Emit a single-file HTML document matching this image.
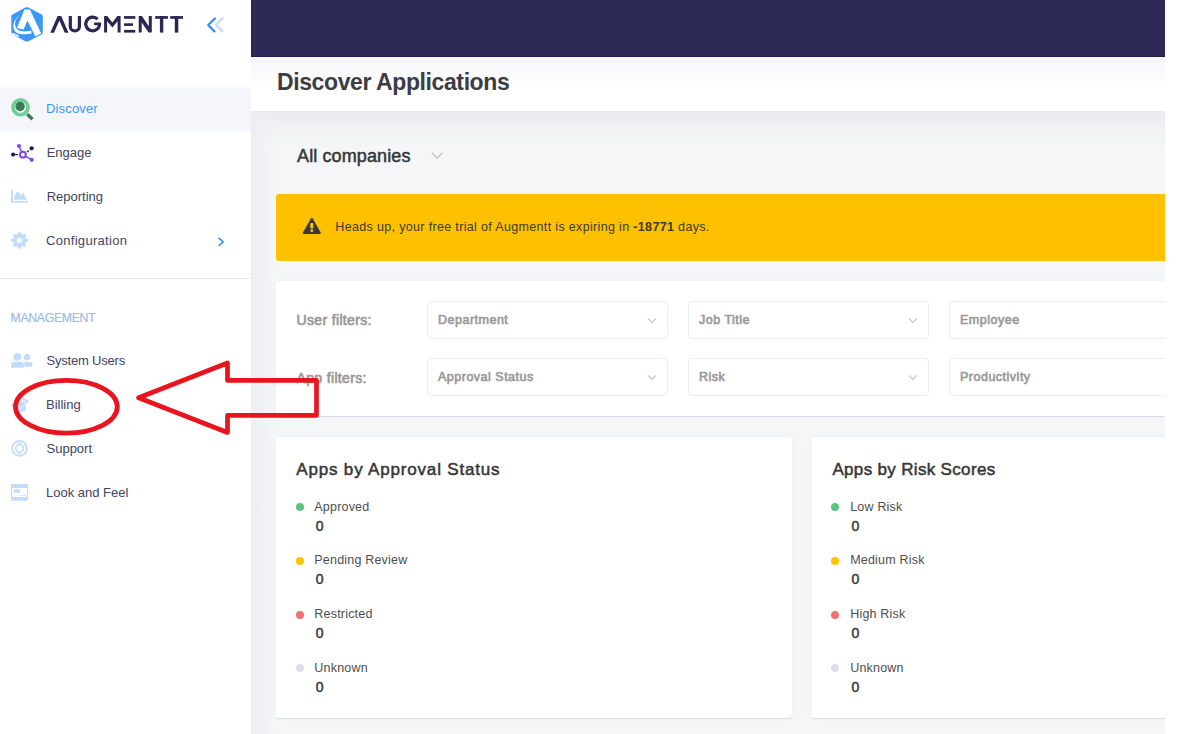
<!DOCTYPE html>
<html><head><meta charset="utf-8">
<style>
html,body{margin:0;padding:0;}
body{width:1199px;height:734px;position:relative;overflow:hidden;background:#fff;font-family:"Liberation Sans",sans-serif;}
.a{position:absolute;}
.t{position:absolute;white-space:nowrap;line-height:1;}
#side{left:0;top:0;width:251px;height:734px;background:#fff;}
#main{left:251px;top:0;width:914px;height:734px;background:#f5f6f8;overflow:hidden;}
#topbar{left:0;top:0;width:914px;height:56px;background:#2d2a57;border-bottom:1px solid #221e4c;}
#band{left:0;top:57px;width:914px;height:54px;background:linear-gradient(#f6f6f9,#fff 60%);}
#shadow{left:0;top:111px;width:914px;height:40px;background:linear-gradient(#ebebef,#f2f2f5 45%,#f5f6f8);}
.nav{color:#42445f;font-size:13px;}
.card{background:#fff;border-radius:3px;box-shadow:0 1px 0 #dcdce6,0 0 10px rgba(40,40,90,0.035);}
.dd{position:absolute;background:#fff;border:1px solid #ececf4;border-radius:4px;box-sizing:border-box;height:38px;}
.ddt{position:absolute;left:10px;font-size:12.5px;-webkit-text-stroke:0.65px #999;letter-spacing:0.5px;color:#9a9a9a;line-height:1;white-space:nowrap;}
.chev{position:absolute;width:5px;height:5px;border-right:1.2px solid #c4c4c4;border-bottom:1.2px solid #c4c4c4;transform:rotate(45deg);}
.lg{font-size:12.5px;letter-spacing:0.2px;color:#4d4d4d;}
.zero{font-size:14px;-webkit-text-stroke:0.5px #3a3a3a;color:#3a3a3a;}
.dot{position:absolute;width:8px;height:8px;border-radius:50%;}
</style></head><body>

<div id="side" class="a">
  <!-- logo -->
  <svg class="a" style="left:0;top:0" width="251" height="50" viewBox="0 0 251 50">
    <path d="M25.3,7.6 Q26.9,6.8 28.5,7.6 L41.6,14.5 Q42.8,15.1 42.8,16.4 L42.8,32.6 Q42.8,33.8 41.6,34.4 L28.5,41.3 Q26.9,42.1 25.3,41.3 L12.5,34.4 Q11.3,33.8 11.3,32.6 L11.3,16.4 Q11.3,15.1 12.5,14.5 Z" fill="#3a98f8"/>
    <g>
    <polygon points="24.4,9.6 29.9,9.6 41.2,33.4 35.4,36.6 27.4,20.6 23.6,29.6 16.9,27.9" fill="#fff"/>
    <path d="M20.8,14.6 C15.5,17.5 12.8,23 13.6,28.2 C14.6,33 19.5,34.6 24.5,34.3 C27.5,34.1 30,33.6 31.5,33.4 L31.3,30.4 C28.5,31.2 25.5,31.6 22.6,31.3 C18,30.8 15.4,28.5 15.1,24.5 C14.9,20.5 17.3,16.8 20.8,14.6 Z" fill="#fff"/>
    <polygon points="11,33.4 13,34.6 17.8,36.8 19.2,36.2 18.2,35.3 13.5,33.1" fill="#fff"/>
    </g>
    <g fill="#2b2753">
      <polygon points="50.3,32.7 57.6,16.1 61.2,16.1 68.5,32.7 64.8,32.7 59.4,20.4 54,32.7"/>
      <path d="M70.3,16.1 V26.4 A4.55,4.55 0 0 0 79.4,26.4 V16.1" fill="none" stroke="#2b2753" stroke-width="3.2"/>
      <path d="M97.6,19.2 A6.85,6.85 0 1 0 99.5,24.2" fill="none" stroke="#2b2753" stroke-width="3.2"/>
      <rect x="94.1" y="22.5" width="7" height="2.7"/>
      <polygon points="104.1,32.6 104.1,16.1 107.3,16.1 112.35,22.6 117.4,16.1 120.6,16.1 120.6,32.6 117.6,32.6 117.6,21.3 112.35,27.6 107.1,21.3 107.1,32.6"/>
      <rect x="124" y="16.1" width="11.3" height="2.7"/>
      <rect x="124" y="23.3" width="9" height="2.6"/>
      <rect x="124" y="29.9" width="11.3" height="2.7"/>
      <polygon points="138.7,32.6 138.7,16.1 141.9,16.1 148.8,26.3 148.8,16.1 151.8,16.1 151.8,32.6 148.6,32.6 141.7,22.4 141.7,32.6"/>
      <rect x="155.2" y="16.1" width="12.8" height="2.7"/>
      <rect x="159.9" y="16.1" width="3.4" height="16.5"/>
      <rect x="170.2" y="16.1" width="12.8" height="2.7"/>
      <rect x="174.8" y="16.1" width="3.5" height="16.5"/>
    </g>
    <polyline points="215,18.4 208.2,24.9 214.5,31.5" fill="none" stroke="#2d8cf5" stroke-width="2.1" stroke-linecap="round" stroke-linejoin="round"/>
    <polyline points="222.7,18 215.9,24.9 222.3,31.3" fill="none" stroke="#c0dcfb" stroke-width="2.1" stroke-linecap="round" stroke-linejoin="round"/>
  </svg>
  <div class="a" style="left:0;top:87px;width:251px;height:44px;background:#f5f6fb"></div>
  <svg class="a" style="left:0;top:85px" width="40" height="420" viewBox="0 85 40 420">
    <!-- discover -->
    <circle cx="20.46" cy="107.3" r="7.45" fill="none" stroke="#74cd95" stroke-width="3.7"/>
    <circle cx="20.1" cy="106.5" r="4.7" fill="#3a7a55"/>
    <line x1="27.3" y1="114.3" x2="32.5" y2="119.3" stroke="#3a7a55" stroke-width="3.4"/>
    <!-- engage -->
    <line x1="19" y1="146" x2="22.9" y2="154.7" stroke="#7b48f0" stroke-width="1.4"/>
    <line x1="22.9" y1="154.7" x2="31.7" y2="159.8" stroke="#7b48f0" stroke-width="1.4"/>
    <line x1="15.3" y1="154.6" x2="18" y2="154.6" stroke="#1e1a45" stroke-width="1.2"/>
    <line x1="27" y1="151.9" x2="29" y2="150.4" stroke="#1e1a45" stroke-width="1.2"/>
    <circle cx="22.88" cy="154.7" r="2.9" fill="#fff" stroke="#7b48f0" stroke-width="2"/>
    <circle cx="19" cy="146" r="2.1" fill="#7b48f0"/>
    <circle cx="31.6" cy="148.3" r="2.1" fill="#1e1a45"/>
    <circle cx="13.1" cy="154.5" r="2.1" fill="#1e1a45"/>
    <circle cx="31.7" cy="159.8" r="2.1" fill="#7b48f0"/>
    <!-- reporting -->
    <g fill="#c2dcfb">
      <rect x="11" y="190.1" width="2" height="12.6"/>
      <rect x="11" y="200.9" width="16.9" height="1.8"/>
      <polygon points="14.15,199.7 14.15,196.4 17.45,191.1 20.6,194.9 23.45,193.1 26.9,199.7"/>
    </g>
    <!-- gear -->
    <g fill="#c2dcfb">
      <circle cx="19.45" cy="240.4" r="6.6"/>
      <g stroke="#c2dcfb" stroke-width="3">
        <line x1="19.45" y1="232.1" x2="19.45" y2="248.7"/>
        <line x1="11" y1="240.4" x2="27.9" y2="240.4"/>
        <line x1="13.6" y1="234.55" x2="25.3" y2="246.25"/>
        <line x1="25.3" y1="234.55" x2="13.6" y2="246.25"/>
      </g>
      <circle cx="19.45" cy="240.4" r="2.6" fill="#fff"/>
    </g>
    <!-- system users -->
    <g fill="#c2dcfb">
      <circle cx="17.16" cy="356.8" r="3.9"/>
      <circle cx="26.97" cy="357.3" r="3.3"/>
      <path d="M11.1,367.8 V364 Q11.1,361.7 13.4,361.7 H21.4 Q23.7,361.7 23.7,364 V367.8 Z"/>
      <path d="M24.3,366.8 V362 H30.1 Q32.4,362 32.4,364.3 V366.8 Z"/>
    </g>
    <!-- billing -->
    <g fill="#c2dcfb">
      <polygon points="10.5,405.3 13.3,402.6 13.3,408"/>
      <rect x="18.6" y="404" width="7.1" height="7.6" rx="0.8"/>
      <path d="M18.6,404 L21,398.5 Q22,397.6 23.5,398.2 L28.4,400.6 Q29.4,401.6 28.2,402.6 L25.7,404 Z"/>
      <line x1="18.8" y1="410.5" x2="25" y2="404.3" stroke="#fff" stroke-width="0.8"/>
      <ellipse cx="23.6" cy="401.3" rx="2" ry="0.9" transform="rotate(20 23.6 401.3)" fill="#fff"/>
    </g>
    <!-- support -->
    <g fill="none" stroke="#c2dcfb">
      <circle cx="19.5" cy="448.4" r="7.4" stroke-width="1.8"/>
      <circle cx="19.5" cy="448.4" r="3.8" stroke-width="1.6"/>
      <line x1="19.5" y1="440.5" x2="19.5" y2="444.6" stroke-width="2.6"/>
      <line x1="19.5" y1="452.2" x2="19.5" y2="456.4" stroke-width="2.6"/>
    </g>
    <circle cx="19.5" cy="442.6" r="0.8" fill="#fff"/>
    <circle cx="19.5" cy="454.2" r="0.8" fill="#fff"/>
    <!-- look and feel -->
    <g fill="#c2dcfb">
      <path d="M12.5,484.1 H26.7 Q28.2,484.1 28.2,485.6 V499.2 Q28.2,500.7 26.7,500.7 H12.5 Q11,500.7 11,499.2 V485.6 Q11,484.1 12.5,484.1 Z M12.2,488 V497 H26.9 V488 Z" fill-rule="evenodd"/>
      <rect x="13.8" y="489.2" width="6.2" height="3.6"/>
      <rect x="19.8" y="495" width="1.4" height="0.9"/>
      <rect x="21.8" y="495" width="1.4" height="0.9"/>
      <rect x="23.8" y="495" width="2" height="0.9"/>
    </g>
    <!-- config chevron -->
  </svg>
  <svg class="a" style="left:214px;top:234px" width="14" height="16" viewBox="214 234 14 16">
    <polyline points="218.6,237.9 223.2,241.9 218.6,245.9" fill="none" stroke="#3d8ef5" stroke-width="1.6"/>
  </svg>
  <div class="t nav" style="left:46px;top:101.8px;letter-spacing:0.15px;color:#3d96f5">Discover</div>
  <div class="t nav" style="left:46.7px;top:145.8px">Engage</div>
  <div class="t nav" style="left:46.7px;top:189.8px">Reporting</div>
  <div class="t nav" style="left:46px;top:233.8px;letter-spacing:0.3px">Configuration</div>
  <div class="a" style="left:0;top:278px;width:251px;height:1px;background:#e3e6ee"></div>
  <div class="t" style="left:10.6px;top:312px;font-size:12.3px;letter-spacing:-0.35px;-webkit-text-stroke:0.2px #9bbbe4;color:#9bbbe4">MANAGEMENT</div>
  <div class="t nav" style="left:46.5px;top:353.8px;letter-spacing:-0.2px">System Users</div>
  <div class="t nav" style="left:46px;top:397.8px">Billing</div>
  <div class="t nav" style="left:46.5px;top:441.8px">Support</div>
  <div class="t nav" style="left:46px;top:485.8px">Look and Feel</div>
</div>

<div id="main" class="a">
  <div id="topbar" class="a"></div>
  <div id="band" class="a"></div>
  <div id="shadow" class="a"></div>
  <div class="a" style="left:0;top:111px;width:24px;height:623px;background:linear-gradient(to right,#eeeef2,rgba(245,246,249,0))"></div>
  <div class="t" style="left:26px;top:70.6px;font-size:23px;letter-spacing:-0.4px;font-weight:bold;color:#3b3c44">Discover Applications</div>

  <div class="t" style="left:46px;top:146.6px;font-size:18px;letter-spacing:0.12px;-webkit-text-stroke:0.5px #363636;color:#363636">All companies</div>
  <svg class="a" style="left:178px;top:149px" width="16" height="13" viewBox="427 149 16 13"><polyline points="430,152.8 435.15,158.2 440.3,152.8" fill="none" stroke="#c6c6c6" stroke-width="1.5"/></svg>

  <div class="a" style="left:25px;top:194px;width:900px;height:67px;background:#ffc000;border-radius:3px"></div>
  <svg class="a" style="left:50px;top:216px" width="22" height="20" viewBox="301 216 22 20">
    <path d="M311.15,218.2 Q311.85,217.2 312.55,218.2 L320.7,232.4 Q321.1,233.9 319.7,234.1 H303.9 Q302.5,233.9 302.9,232.4 Z" fill="#343840"/>
    <rect x="310.2" y="223" width="3.2" height="5.4" rx="0.9" fill="#ffc000"/>
    <circle cx="311.8" cy="230.8" r="1.45" fill="#ffc000"/>
  </svg>
  <div class="t" style="left:84.3px;top:221px;font-size:12.5px;letter-spacing:0.34px;color:#3a3a3a">Heads up, your free trial of Augmentt is expiring in <b>-18771</b> days.</div>

  <div class="a card" style="left:25px;top:281px;width:900px;height:135px;"></div>
  <div class="t" style="left:45.5px;top:313.4px;font-size:14px;-webkit-text-stroke:0.7px #999;letter-spacing:0.35px;color:#9a9a9a">User filters:</div>
  <div class="t" style="left:45.5px;top:370.7px;font-size:14px;-webkit-text-stroke:0.7px #999;letter-spacing:0.35px;color:#9a9a9a">App filters:</div>

  <div class="dd" style="left:176px;top:301px;width:241px"><div class="ddt" style="top:11.8px">Department</div><svg class="a" style="left:217px;top:13px" width="14" height="10" viewBox="0 0 14 10"><polyline points="2.9,3.4 6.95,7.4 11,3.4" fill="none" stroke="#c4c4c4" stroke-width="1.2"/></svg></div>
  <div class="dd" style="left:437px;top:301px;width:241px"><div class="ddt" style="top:11.8px">Job Title</div><svg class="a" style="left:217px;top:13px" width="14" height="10" viewBox="0 0 14 10"><polyline points="2.9,3.4 6.95,7.4 11,3.4" fill="none" stroke="#c4c4c4" stroke-width="1.2"/></svg></div>
  <div class="dd" style="left:698px;top:301px;width:241px"><div class="ddt" style="top:11.8px">Employee</div></div>
  <div class="dd" style="left:176px;top:358px;width:241px"><div class="ddt" style="top:11.8px">Approval Status</div><svg class="a" style="left:217px;top:13px" width="14" height="10" viewBox="0 0 14 10"><polyline points="2.9,3.4 6.95,7.4 11,3.4" fill="none" stroke="#c4c4c4" stroke-width="1.2"/></svg></div>
  <div class="dd" style="left:437px;top:358px;width:241px"><div class="ddt" style="top:11.8px">Risk</div><svg class="a" style="left:217px;top:13px" width="14" height="10" viewBox="0 0 14 10"><polyline points="2.9,3.4 6.95,7.4 11,3.4" fill="none" stroke="#c4c4c4" stroke-width="1.2"/></svg></div>
  <div class="dd" style="left:698px;top:358px;width:241px"><div class="ddt" style="top:11.8px">Productivity</div></div>

  <div class="a card" style="left:25px;top:437px;width:516px;height:281px;"></div>
  <div class="a card" style="left:561px;top:437px;width:516px;height:281px;"></div>
  <div class="t" style="left:45.3px;top:460.8px;font-size:17px;letter-spacing:0.82px;-webkit-text-stroke:0.5px #363636;color:#363636">Apps by Approval Status</div>
  <div class="t" style="left:581.4px;top:460.8px;font-size:17px;letter-spacing:0.33px;-webkit-text-stroke:0.5px #363636;color:#363636">Apps by Risk Scores</div>
  <div class="dot" style="left:45.00px;top:503.40px;background:#5cc27d"></div>
  <div class="t lg" style="left:63.30px;top:500.80px">Approved</div>
  <div class="t zero" style="left:64.70px;top:518.60px">0</div>
  <div class="dot" style="left:580.00px;top:503.40px;background:#5cc27d"></div>
  <div class="t lg" style="left:599.20px;top:500.80px">Low Risk</div>
  <div class="t zero" style="left:600.40px;top:518.60px">0</div>
  <div class="dot" style="left:45.00px;top:557.07px;background:#ffc107"></div>
  <div class="t lg" style="left:63.30px;top:554.47px">Pending Review</div>
  <div class="t zero" style="left:64.70px;top:572.27px">0</div>
  <div class="dot" style="left:580.00px;top:557.07px;background:#ffc107"></div>
  <div class="t lg" style="left:599.20px;top:554.47px">Medium Risk</div>
  <div class="t zero" style="left:600.40px;top:572.27px">0</div>
  <div class="dot" style="left:45.00px;top:610.74px;background:#f07272"></div>
  <div class="t lg" style="left:63.30px;top:608.14px">Restricted</div>
  <div class="t zero" style="left:64.70px;top:625.94px">0</div>
  <div class="dot" style="left:580.00px;top:610.74px;background:#f07272"></div>
  <div class="t lg" style="left:599.20px;top:608.14px">High Risk</div>
  <div class="t zero" style="left:600.40px;top:625.94px">0</div>
  <div class="dot" style="left:45.00px;top:664.41px;background:#dedcf0"></div>
  <div class="t lg" style="left:63.30px;top:661.81px">Unknown</div>
  <div class="t zero" style="left:64.70px;top:679.61px">0</div>
  <div class="dot" style="left:580.00px;top:664.41px;background:#dedcf0"></div>
  <div class="t lg" style="left:599.20px;top:661.81px">Unknown</div>
  <div class="t zero" style="left:600.40px;top:679.61px">0</div>
</div>

<svg class="a" style="left:0;top:0;z-index:10" width="1199" height="734" viewBox="0 0 1199 734">
  <ellipse cx="66.4" cy="406.75" rx="50.9" ry="26.45" fill="none" stroke="#e8141e" stroke-width="4.8"/>
  <polygon points="138.6,397.8 227.5,363 227.5,380.4 316.5,380.4 316.5,415.4 227.5,415.4 227.5,432.5" fill="none" stroke="#e8141e" stroke-width="4.7" stroke-linejoin="round"/>
</svg>
</body></html>
